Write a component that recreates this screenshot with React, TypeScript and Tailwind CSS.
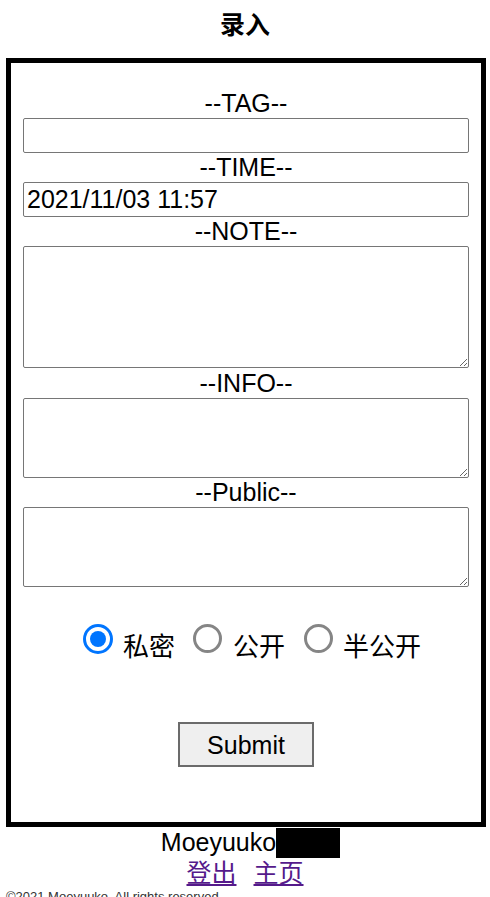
const fieldBox =
  'mx-auto block w-[446px] rounded-[2px] border border-[#767676] bg-white px-[3px] text-[25px] leading-[28px] text-black outline-none'

function Label({ text, h }: { text: string; h: string }) {
  return <div className={`text-center text-[25px] ${h}`}>{text}</div>
}

function Radio({ checked }: { checked?: boolean }) {
  if (checked) {
    return (
      <span className="flex h-[30px] w-[30px] items-center justify-center rounded-full border-[3px] border-[#0075ff] bg-white">
        <span className="h-[16px] w-[16px] rounded-full bg-[#0075ff]" />
      </span>
    )
  }
  return <span className="block h-[29px] w-[29px] rounded-full border-[3px] border-[#858585] bg-white" />
}

export default function App() {
  return (
    <div className="w-[490px] bg-white text-black font-['Liberation_Sans','Noto_Sans_CJK_SC',sans-serif]">
      <div className="h-[58px] pt-[10px] text-center text-[25px] font-bold leading-[30px]">录入</div>

      <div className="mx-[6px] h-[769px] w-[480px] border-[5px] border-black pt-[26px]">
        <Label text="--TAG--" h="h-[29px] leading-[29px]" />
        <input type="text" className={`${fieldBox} h-[35px]`} />

        <Label text="--TIME--" h="h-[29px] leading-[29px]" />
        <input type="text" defaultValue="2021/11/03 11:57" className={`${fieldBox} h-[35px]`} />

        <Label text="--NOTE--" h="h-[29px] leading-[29px]" />
        <textarea className={`${fieldBox} h-[122px]`} />

        <Label text="--INFO--" h="h-[30px] leading-[30px]" />
        <textarea className={`${fieldBox} h-[80px]`} />

        <Label text="--Public--" h="h-[29px] leading-[29px]" />
        <textarea className={`${fieldBox} h-[80px]`} />

        {/* visibility */}
        <div className="mt-[37px] flex h-[36px] items-start justify-center pl-[12px] text-[26px] leading-[30px]">
          <Radio checked />
          <span className="ml-[10px] mt-[8px]">私密</span>
          <span className="ml-[18px]">
            <Radio />
          </span>
          <span className="ml-[11px] mt-[8px]">公开</span>
          <span className="ml-[19px]">
            <Radio />
          </span>
          <span className="ml-[10px] mt-[8px]">半公开</span>
        </div>

        <button className="mx-auto mt-[62px] block h-[45px] w-[136px] border-2 border-[#6b6b6b] bg-[#efefef] text-[25px] leading-[28px] text-black">
          Submit
        </button>
      </div>

      <div className="h-[30px] pl-[11px] text-center text-[25px] leading-[30px]">
        Moeyuuko<span className="inline-block h-[30px] w-[64px] translate-y-[1px] bg-black align-top" />
      </div>
      <div className="flex h-[32px] justify-center gap-[17px] text-[25px] leading-[32px] text-[#551a8b]">
        <a href="#" className="underline">登出</a>
        <a href="#" className="underline">主页</a>
      </div>
      <div className="pl-[6px] text-[13px] leading-[15px] text-[#333]">©2021 Moeyuuko. All rights reserved.</div>
    </div>
  )
}
